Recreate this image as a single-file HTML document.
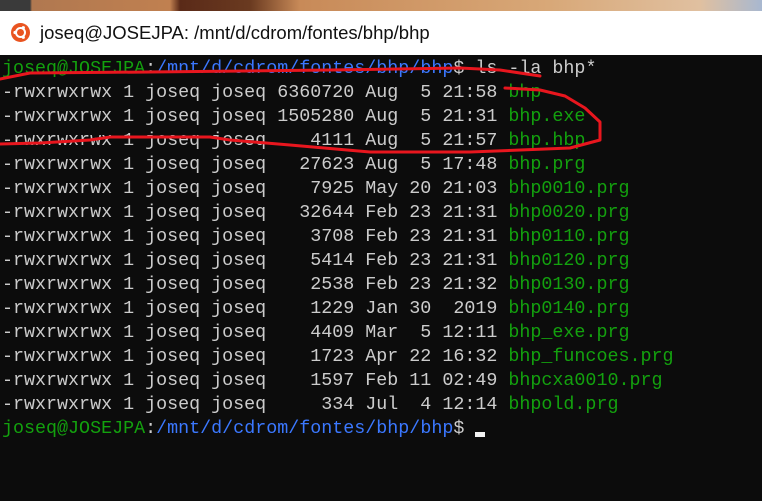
<!DOCTYPE html>
<html><head><style>
body{margin:0;width:762px;height:501px;overflow:hidden;background:#0c0c0c;position:relative;font-family:"Liberation Mono",monospace}
#top{position:absolute;left:0;top:0;width:762px;height:11px;background:linear-gradient(90deg,#3a3a3a 0,#3a3a3a 30px,#b07850 32px,#c08050 170px,#5a2a18 180px,#6a3a20 250px,#c88a58 300px,#d8a878 550px,#e0c0a0 700px,#a8b8d0 762px);border-bottom:1px solid #555}
#title{position:absolute;left:0;top:11px;width:762px;height:44px;background:#fff}
#title span{position:absolute;left:40px;top:11px;font:18.5px "Liberation Sans",sans-serif;color:#111}
#ico{position:absolute;left:11px;top:12px;width:19px;height:19px;border-radius:50%;background:#e95420}
#term{position:absolute;left:2px;top:57px;color:#cccccc;font-size:18.35px;line-height:24px;white-space:pre}
.g{color:#13a10e}.b{color:#3b78ff}
#cur{display:inline-block;width:10px;height:5px;background:#f2f2f2;vertical-align:-4px}
svg{position:absolute;left:0;top:0}
</style></head><body>
<div id="top"></div>
<div id="title"><div id="ico"><svg width="19" height="19" viewBox="0 0 19 19"><circle cx="9.5" cy="9.5" r="4.5" fill="none" stroke="#fff" stroke-width="2"/><circle cx="4" cy="9.5" r="1.6" fill="#fff"/><circle cx="12.3" cy="4.7" r="1.6" fill="#fff"/><circle cx="12.3" cy="14.3" r="1.6" fill="#fff"/></svg></div><span>joseq@JOSEJPA: /mnt/d/cdrom/fontes/bhp/bhp</span></div>
<div id="term"><span class="g">joseq@JOSEJPA</span>:<span class="b">/mnt/d/cdrom/fontes/bhp/bhp</span>$ ls -la bhp*
-rwxrwxrwx 1 joseq joseq 6360720 Aug  5 21:58 <span class="g">bhp</span>
-rwxrwxrwx 1 joseq joseq 1505280 Aug  5 21:31 <span class="g">bhp.exe</span>
-rwxrwxrwx 1 joseq joseq    4111 Aug  5 21:57 <span class="g">bhp.hbp</span>
-rwxrwxrwx 1 joseq joseq   27623 Aug  5 17:48 <span class="g">bhp.prg</span>
-rwxrwxrwx 1 joseq joseq    7925 May 20 21:03 <span class="g">bhp0010.prg</span>
-rwxrwxrwx 1 joseq joseq   32644 Feb 23 21:31 <span class="g">bhp0020.prg</span>
-rwxrwxrwx 1 joseq joseq    3708 Feb 23 21:31 <span class="g">bhp0110.prg</span>
-rwxrwxrwx 1 joseq joseq    5414 Feb 23 21:31 <span class="g">bhp0120.prg</span>
-rwxrwxrwx 1 joseq joseq    2538 Feb 23 21:32 <span class="g">bhp0130.prg</span>
-rwxrwxrwx 1 joseq joseq    1229 Jan 30  2019 <span class="g">bhp0140.prg</span>
-rwxrwxrwx 1 joseq joseq    4409 Mar  5 12:11 <span class="g">bhp_exe.prg</span>
-rwxrwxrwx 1 joseq joseq    1723 Apr 22 16:32 <span class="g">bhp_funcoes.prg</span>
-rwxrwxrwx 1 joseq joseq    1597 Feb 11 02:49 <span class="g">bhpcxa0010.prg</span>
-rwxrwxrwx 1 joseq joseq     334 Jul  4 12:14 <span class="g">bhpold.prg</span>
<span class="g">joseq@JOSEJPA</span>:<span class="b">/mnt/d/cdrom/fontes/bhp/bhp</span>$ <span id="cur"></span></div>
<svg width="762" height="501"><g fill="none" stroke="#e8161e" stroke-width="3" stroke-linecap="round" stroke-linejoin="round">
<path d="M0 79 L30 73 L150 72 L330 70 L460 68 L500 70 L540 76"/>
<path d="M505 88 L540 90 L565 96 L585 108 L600 122 L600 140 L570 148 L470 152 L370 152 L290 145 L230 140 L210 137 L110 137 L90 140 L40 143 L0 144"/>
</g></svg>
</body></html>
